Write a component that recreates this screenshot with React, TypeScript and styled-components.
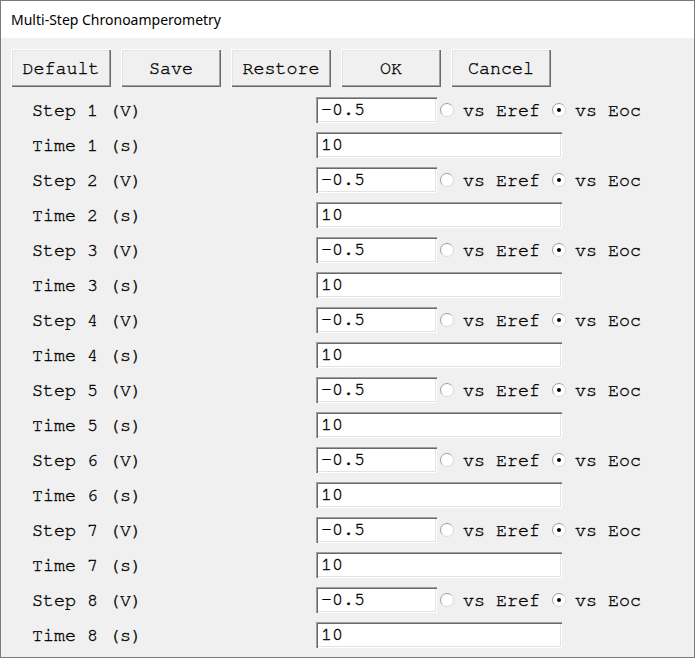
import React from "react";
import styled, { createGlobalStyle } from "styled-components";

const Global = createGlobalStyle`
  html, body { margin: 0; padding: 0; background: #ffffff; }
  * { box-sizing: border-box; }
`;

const Window = styled.div`
  width: 695px;
  height: 658px;
  border: 1px solid #7a7a7a;
  display: flex;
  flex-direction: column;
  background: #f0f0f0;
`;

const TitleBar = styled.div`
  height: 37px;
  flex: none;
  background: #ffffff;
  display: flex;
  align-items: center;
  padding-left: 10px;
  padding-bottom: 1px;
  font-family: "Noto Sans", "Open Sans", sans-serif;
  font-size: 14px;
  color: #000000;
`;

const Body = styled.div`
  flex: 1;
  padding: 11px 0 0 10px;
  font-family: "Nimbus Mono PS", "Nimbus Mono L", "FreeMono", "Courier 10 Pitch", "Courier New", "Liberation Mono", monospace;
  font-size: 18.33px;
  color: #000000;
  -webkit-text-stroke: 0.35px #000000;
`;

const Toolbar = styled.div`
  display: flex;
  gap: 10px;
`;

const Button = styled.button`
  width: 100px;
  height: 38px;
  padding: 0;
  margin: 0;
  background: #f0f0f0;
  font-family: inherit;
  font-size: inherit;
  color: #000000;
  border: none;
  box-shadow: inset 1px 1px 0 #ffffff, inset -1px -1px 0 #696969,
    inset -2px -2px 0 #a0a0a0, inset 2px 2px 0 #e3e3e3;
`;

const Form = styled.div`
  margin-top: 10px;
  padding-left: 21px;
  display: grid;
  grid-template-columns: 284px auto;
  grid-auto-rows: 26px;
  row-gap: 9px;
  align-items: center;
`;

const Label = styled.div`
  white-space: pre;
  line-height: 26px;
  padding-top: 1px;
`;

const FieldRow = styled.div`
  display: flex;
  align-items: center;
  height: 26px;
`;

const Input = styled.div<{ $width: number }>`
  width: ${(p) => p.$width}px;
  height: 26px;
  background: #ffffff;
  padding-left: 5px;
  padding-top: 2px;
  line-height: 22px;
  white-space: pre;
  box-shadow: inset 1px 1px 0 #a0a0a0, inset 2px 2px 0 #696969,
    inset -1px -1px 0 #ffffff, inset -2px -2px 0 #e3e3e3;
`;

const RadioOption = styled.div<{ $first?: boolean }>`
  display: flex;
  align-items: center;
  margin-left: ${(p) => (p.$first ? 3 : 12)}px;
  white-space: pre;
`;

const RadioText = styled.span`
  margin-left: 9px;
  line-height: 26px;
  padding-top: 1px;
`;

const RadioIcon = ({ checked }: { checked: boolean }) => (
  <svg width="14" height="14" viewBox="0 0 14 14" style={{ flex: "none" }}>
    <circle cx="7" cy="7" r="6.5" fill="#ffffff" />
    <path d="M2.4 11.6 A6.5 6.5 0 0 1 11.6 2.4" fill="none" stroke="#a0a0a0" strokeWidth="1" />
    <path d="M11.6 2.4 A6.5 6.5 0 0 1 2.4 11.6" fill="none" stroke="#dadada" strokeWidth="1" />
    {checked && <circle cx="7" cy="7" r="2" fill="#000000" />}
  </svg>
);

const steps = [1, 2, 3, 4, 5, 6, 7, 8];

export default function App() {
  return (
    <>
      <Global />
      <Window>
        <TitleBar>Multi-Step Chronoamperometry</TitleBar>
        <Body>
          <Toolbar>
            <Button>Default</Button>
            <Button>Save</Button>
            <Button>Restore</Button>
            <Button>OK</Button>
            <Button>Cancel</Button>
          </Toolbar>
          <Form>
            {steps.map((n) => (
              <React.Fragment key={n}>
                <Label>{`Step ${n} (V)`}</Label>
                <FieldRow>
                  <Input $width={121}>-0.5</Input>
                  <RadioOption $first>
                    <RadioIcon checked={false} />
                    <RadioText>vs Eref</RadioText>
                  </RadioOption>
                  <RadioOption>
                    <RadioIcon checked={true} />
                    <RadioText>vs Eoc</RadioText>
                  </RadioOption>
                </FieldRow>
                <Label>{`Time ${n} (s)`}</Label>
                <FieldRow>
                  <Input $width={246}>10</Input>
                </FieldRow>
              </React.Fragment>
            ))}
          </Form>
        </Body>
      </Window>
    </>
  );
}
